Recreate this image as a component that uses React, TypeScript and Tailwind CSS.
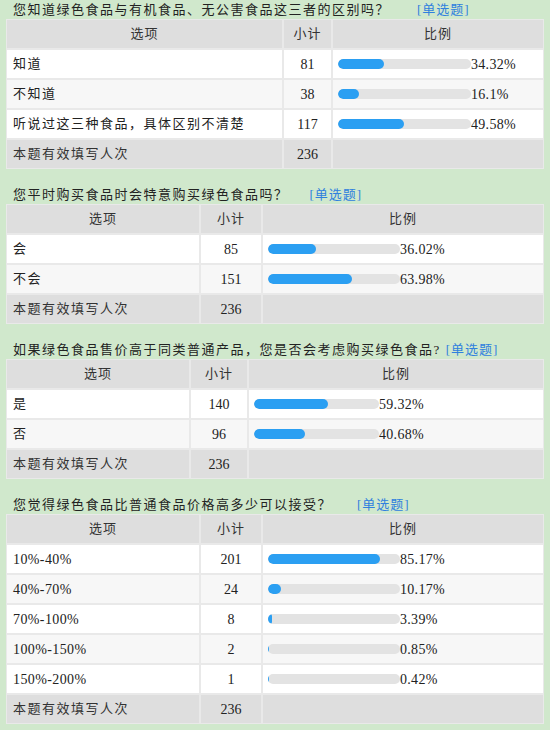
import React from "react";

type Row = { label: string; count: number; pct: number; text: string };

type Question = {
  title: string;
  gap: string;
  cols: string;
  barW: number;
  rows: Row[];
  total: number;
};

const questions: Question[] = [
  {
    title: "您知道绿色食品与有机食品、无公害食品这三者的区别吗？",
    gap: "ml-[27px]",
    cols: "grid-cols-[275px_47px_1fr]",
    barW: 133,
    rows: [
      { label: "知道", count: 81, pct: 34.32, text: "34.32%" },
      { label: "不知道", count: 38, pct: 16.1, text: "16.1%" },
      { label: "听说过这三种食品，具体区别不清楚", count: 117, pct: 49.58, text: "49.58%" },
    ],
    total: 236,
  },
  {
    title: "您平时购买食品时会特意购买绿色食品吗？",
    gap: "ml-[21px]",
    cols: "grid-cols-[192px_60px_1fr]",
    barW: 132,
    rows: [
      { label: "会", count: 85, pct: 36.02, text: "36.02%" },
      { label: "不会", count: 151, pct: 63.98, text: "63.98%" },
    ],
    total: 236,
  },
  {
    title: "如果绿色食品售价高于同类普通产品，您是否会考虑购买绿色食品?",
    gap: "ml-[5px]",
    cols: "grid-cols-[182px_56px_1fr]",
    barW: 125,
    rows: [
      { label: "是", count: 140, pct: 59.32, text: "59.32%" },
      { label: "否", count: 96, pct: 40.68, text: "40.68%" },
    ],
    total: 236,
  },
  {
    title: "您觉得绿色食品比普通食品价格高多少可以接受？",
    gap: "ml-[25px]",
    cols: "grid-cols-[192px_60px_1fr]",
    barW: 132,
    rows: [
      { label: "10%-40%", count: 201, pct: 85.17, text: "85.17%" },
      { label: "40%-70%", count: 24, pct: 10.17, text: "10.17%" },
      { label: "70%-100%", count: 8, pct: 3.39, text: "3.39%" },
      { label: "100%-150%", count: 2, pct: 0.85, text: "0.85%" },
      { label: "150%-200%", count: 1, pct: 0.42, text: "0.42%" },
    ],
    total: 236,
  },
];

function Bar({ pct, width }: { pct: number; width: number }) {
  return (
    <div className="h-[10px] rounded-full bg-[#e3e3e3] overflow-hidden" style={{ width }}>
      <div className="h-full rounded-full bg-[#2b9ff2]" style={{ width: `${pct}%` }} />
    </div>
  );
}

function QuestionBlock({ q }: { q: Question }) {
  const head = "h-[28px] bg-[#dedede] flex items-center justify-center text-[#333] tracking-[1px]";
  return (
    <section className="mb-[16px]">
      <div className="h-[19px] flex items-center pl-[13px] tracking-[1.5px] text-[#222]">
        <span>{q.title}</span>
        <span className={`${q.gap} text-[#2f80de] tracking-[1px]`}>[单选题]</span>
      </div>
      <div className="mx-[6px] bg-[#e9e9e9] p-px">
        <div className={`grid ${q.cols} gap-[2px]`}>
          <div className={head}>选项</div>
          <div className={head}>小计</div>
          <div className={head}>比例</div>
          {q.rows.map((r, i) => {
            const bg = i % 2 === 0 ? "bg-white" : "bg-[#f7f7f7]";
            const numeric = /^[0-9%-]+$/.test(r.label);
            return (
              <React.Fragment key={r.label}>
                <div
                  className={`${bg} h-[28px] flex items-center pl-[6px] ${
                    numeric ? "text-[14px] tracking-[0.4px]" : "tracking-[1.5px]"
                  }`}
                >
                  {r.label}
                </div>
                <div className={`${bg} h-[28px] flex items-center justify-center text-[14px]`}>{r.count}</div>
                <div className={`${bg} h-[28px] flex items-center pl-[5px]`}>
                  <Bar pct={r.pct} width={q.barW} />
                  <span className="text-[14px] tracking-[0.3px]">{r.text}</span>
                </div>
              </React.Fragment>
            );
          })}
          <div className="h-[28px] bg-[#dedede] flex items-center pl-[6px] text-[#333] tracking-[1.5px]">
            本题有效填写人次
          </div>
          <div className="h-[28px] bg-[#dedede] flex items-center justify-center text-[14px]">{q.total}</div>
          <div className="h-[28px] bg-[#dedede]" />
        </div>
      </div>
    </section>
  );
}

export default function App() {
  return (
    <main
      className="min-h-screen bg-[#d0e8cc] text-[13px] text-[#222]"
      style={{ fontFamily: '"Liberation Serif", "Noto Sans CJK SC", serif' }}
    >
      {questions.map((q) => (
        <QuestionBlock key={q.title} q={q} />
      ))}
    </main>
  );
}
